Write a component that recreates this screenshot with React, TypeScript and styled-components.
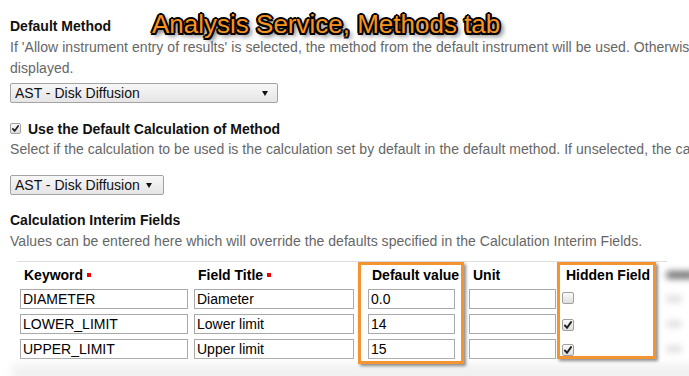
import React from 'react';
import styled, { createGlobalStyle } from 'styled-components';

const GlobalStyle = createGlobalStyle`
  html, body {
    margin: 0;
    padding: 0;
    background: #fff;
    overflow: hidden;
  }
  body {
    font-family: 'Liberation Sans', Arial, sans-serif;
    font-size: 14px;
    color: #000;
  }
`;

const Page = styled.div`
  position: relative;
  width: 689px;
  height: 376px;
  overflow: hidden;
  padding: 16px 0 0 10px;
  box-sizing: border-box;
`;

const Annotation = styled.div`
  position: absolute;
  left: 152px;
  top: 11px;
  font-family: 'Liberation Sans', Arial, sans-serif;
  font-size: 26px;
  line-height: 26px;
  color: #f7931e;
  white-space: nowrap;
  text-shadow:
    -1.5px -1.5px 0 #000, 1.5px -1.5px 0 #000, -1.5px 1.5px 0 #000, 1.5px 1.5px 0 #000,
    0 -2px 0 #000, 0 2px 0 #000, -2px 0 0 #000, 2px 0 0 #000,
    3px 3px 5px rgba(0, 0, 0, 0.9);
`;

const Heading = styled.div<{ $gap?: number }>`
  font-weight: 700;
  font-size: 14px;
  line-height: 21px;
  color: #111;
  margin-top: ${(p) => p.$gap ?? 0}px;
`;

const Help = styled.div`
  font-size: 14px;
  line-height: 21px;
  color: #666;
  white-space: nowrap;
  letter-spacing: 0.05px;
`;

const SelectBox = styled.div<{ $width: number; $gap: number; $padRight: number }>`
  display: flex;
  align-items: center;
  box-sizing: border-box;
  width: ${(p) => p.$width}px;
  height: 20px;
  margin-top: ${(p) => p.$gap}px;
  padding: 0 ${(p) => p.$padRight}px 0 4px;
  border: 1px solid #a3a3a3;
  border-radius: 2px;
  background: linear-gradient(#f7f7f7, #e5e5e5);
  font-size: 14px;
  line-height: 16px;
  color: #111;
`;

const Arrow = styled.span<{ $gap?: number }>`
  margin-left: ${(p) => (p.$gap ? `${p.$gap}px` : 'auto')};
  width: 0;
  height: 0;
  border-left: 3px solid transparent;
  border-right: 3px solid transparent;
  border-top: 5px solid #111;
`;

const CheckRow = styled.label`
  display: flex;
  align-items: center;
  margin-top: 15px;
  height: 21px;
  font-weight: 700;
  font-size: 14px;
  color: #111;
  gap: 7px;
`;

const Box = styled.span<{ $size: number }>`
  display: inline-flex;
  align-items: center;
  justify-content: center;
  box-sizing: border-box;
  width: ${(p) => p.$size}px;
  height: ${(p) => p.$size}px;
  border: 1px solid #a0a0a0;
  border-radius: 2px;
  background: linear-gradient(#fafafa, #dedede);
`;

const CheckBox: React.FC<{ checked?: boolean; size?: number }> = ({ checked, size = 11 }) => (
  <Box $size={size}>
    {checked && (
      <svg width={size - 4} height={size - 4} viewBox="0 0 10 10">
        <path d="M1.2 5.6 L3.8 8.4 L8.8 1.4" fill="none" stroke="#222" strokeWidth="2.4" strokeLinecap="round" />
      </svg>
    )}
  </Box>
);

const TableWrap = styled.div`
  position: relative;
  margin: 9px 0 0 7px;
  border-top: 1px solid #dedede;
  width: 650px;
`;

const Grid = styled.div`
  display: grid;
  grid-template-columns: 174px 174px 101px 93px 102px 40px;
  row-gap: 5px;
  padding-left: 3px;
`;

const HeadCell = styled.div`
  height: 17px;
  padding: 5px 0 0 4px;
  font-weight: 700;
  font-size: 14px;
  line-height: 16px;
  color: #000;
  white-space: nowrap;
`;

const Smudge = styled.div<{ $width: number; $tone: string; $top: number }>`
  width: ${(p) => p.$width}px;
  height: 8px;
  margin: ${(p) => p.$top}px 0 0 2px;
  background: ${(p) => p.$tone};
  border-radius: 4px;
  filter: blur(3px);
`;

const Required = styled.span`
  display: inline-block;
  width: 4px;
  height: 4px;
  margin-left: 4px;
  background: #e00;
  vertical-align: 3px;
`;

const Field = styled.input<{ $width: number }>`
  box-sizing: border-box;
  width: ${(p) => p.$width}px;
  height: 20px;
  padding: 0 2px;
  border: 1px solid #a9a9a9;
  font-family: 'Liberation Sans', Arial, sans-serif;
  font-size: 14px;
  line-height: 16px;
  color: #000;
  background: #fff;
  outline: none;
`;

const CheckCell = styled.div`
  padding: 2px 0 0 0;
`;

const Haze = styled.div`
  grid-column: 1 / -1;
  height: 22px;
  margin-left: -8px;
  background: #f1f1f1;
  filter: blur(4px);
`;

const Highlight = styled.div<{ $left: number; $width: number; $height: number }>`
  position: absolute;
  top: 0;
  left: ${(p) => p.$left}px;
  width: ${(p) => p.$width}px;
  height: ${(p) => p.$height}px;
  box-sizing: border-box;
  border: 3px solid #f39430;
  box-shadow: 2px 2px 3px rgba(0, 0, 0, 0.45);
  pointer-events: none;
`;

const rows = [
  { keyword: 'DIAMETER', title: 'Diameter', value: '0.0', hidden: false },
  { keyword: 'LOWER_LIMIT', title: 'Lower limit', value: '14', hidden: true },
  { keyword: 'UPPER_LIMIT', title: 'Upper limit', value: '15', hidden: true },
];

export default function App() {
  return (
    <Page>
      <GlobalStyle />
      <Annotation>Analysis Service, Methods tab</Annotation>

      <Heading>Default Method</Heading>
      <Help>
        If 'Allow instrument entry of results' is selected, the method from the default instrument will be used. Otherwise, the methods selected above will be
        <br />
        displayed.
      </Help>
      <SelectBox $width={268} $gap={4} $padRight={9}>
        AST - Disk Diffusion
        <Arrow />
      </SelectBox>

      <CheckRow>
        <CheckBox checked size={11} />
        Use the Default Calculation of Method
      </CheckRow>
      <Help>
        Select if the calculation to be used is the calculation set by default in the default method. If unselected, the calculation can be selected manually
      </Help>
      <SelectBox $width={154} $gap={15} $padRight={6}>
        AST - Disk Diffusion
        <Arrow $gap={6} />
      </SelectBox>

      <Heading $gap={15}>Calculation Interim Fields</Heading>
      <Help>Values can be entered here which will override the defaults specified in the Calculation Interim Fields.</Help>

      <TableWrap>
        <Grid>
          <HeadCell>
            Keyword<Required />
          </HeadCell>
          <HeadCell>
            Field Title<Required />
          </HeadCell>
          <HeadCell>Default value</HeadCell>
          <HeadCell>Unit</HeadCell>
          <HeadCell>Hidden Field</HeadCell>
          <Smudge $width={30} $tone="#777" $top={9} />

          {rows.map((r) => (
            <React.Fragment key={r.keyword}>
              <Field $width={168} defaultValue={r.keyword} />
              <Field $width={160} defaultValue={r.title} />
              <Field $width={87} defaultValue={r.value} />
              <Field $width={87} defaultValue="" />
              <CheckCell>
                <CheckBox checked={r.hidden} size={12} />
              </CheckCell>
              <Smudge $width={16} $tone="#e2e2e2" $top={6} />
            </React.Fragment>
          ))}
          <Haze />
        </Grid>

        <Highlight $left={341} $width={106} $height={102} />
        <Highlight $left={540} $width={99} $height={97} />
      </TableWrap>
    </Page>
  );
}
